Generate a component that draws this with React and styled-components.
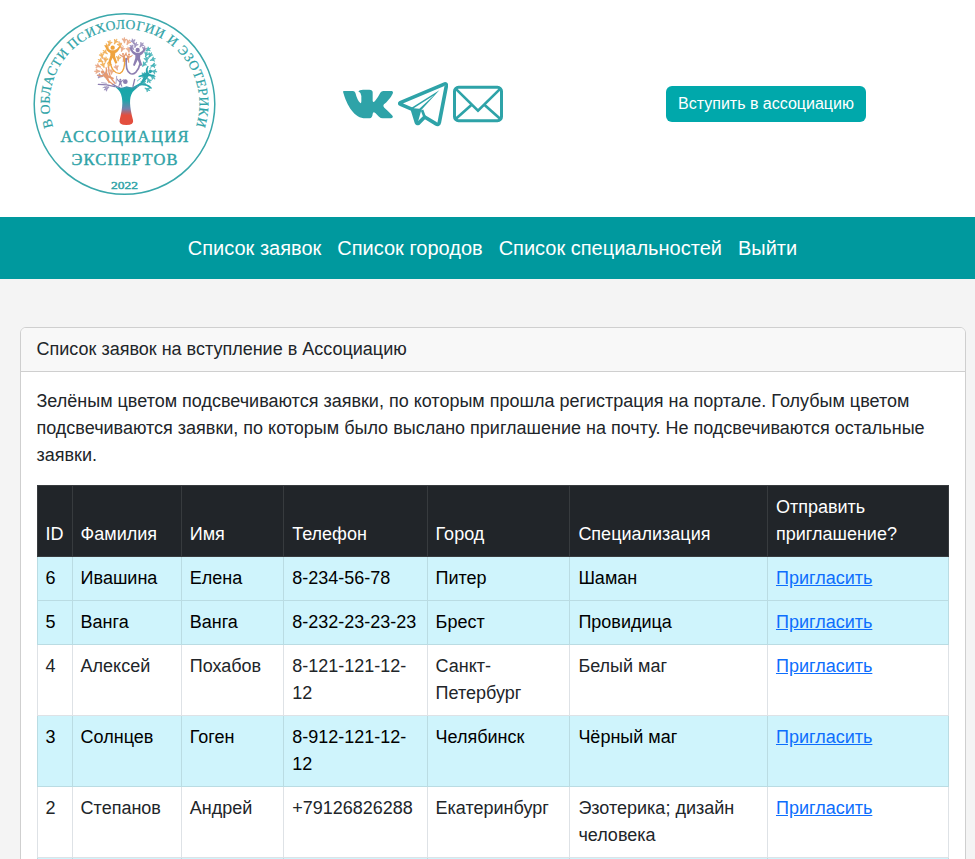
import React from "react";
import styled, { createGlobalStyle } from "styled-components";

const GlobalStyle = createGlobalStyle`
  * { box-sizing: border-box; }
  html, body { margin: 0; height: 100%; overflow: hidden; }
  body {
    background: #f4f4f4;
    color: #212529;
    font: 18px/27px "Liberation Sans", Arial, sans-serif;
  }
`;

const Page = styled.div`
  height: 100vh;
  overflow: hidden;
`;

const Header = styled.header`
  display: grid;
  grid-template-columns: 310px 323px 200px;
  align-items: center;
  height: 217px;
  padding: 0 0 9px 33px;
  background: #fff;
`;

const LogoDrawing = styled.svg`
  display: block;
  width: 183px;
  height: 184px;
  font-family: "Liberation Serif", "Times New Roman", serif;
  fill: #2fa3a7;
`;

const Socials = styled.div`
  display: flex;
  gap: 5px;
`;

const SocialIcon = styled.svg`
  display: block;
  width: 50px;
  height: 50px;
  color: #2ea3a8;
`;

const JoinButton = styled.button`
  height: 36px;
  padding: 0;
  border: 0;
  border-radius: 6px;
  background: #00a8ab;
  color: #fff;
  font: 16px/24px "Liberation Sans", Arial, sans-serif;
`;

const Nav = styled.nav`
  display: flex;
  justify-content: center;
  align-items: center;
  gap: 16px;
  height: 62px;
  padding-left: 10px;
  background: #00999e;
`;

const NavLink = styled.a`
  color: #fff;
  font-size: 20px;
  line-height: 30px;
  white-space: nowrap;
`;

const Card = styled.section`
  margin: 48px 9.5px 0 19.5px;
  border: 1px solid #cfcfcf;
  border-radius: 6px;
  background: #fff;
  overflow: hidden;
`;

const CardTitle = styled.div`
  padding: 8px 16px;
  border-bottom: 1px solid #cfcfcf;
  background: #f8f8f8;
`;

const CardBody = styled.div`
  padding: 16px;
`;

const Note = styled.p`
  margin: 0 0 16px;
`;

const Table = styled.table`
  width: 911.5px;
  table-layout: fixed;
  border-collapse: collapse;
`;

const Column = styled.col`
  width: ${(p) => p.$width}px;
`;

const HeadCell = styled.th`
  padding: 8px;
  border: 1px solid #373b3e;
  background: #212529;
  color: #fff;
  font-weight: 400;
  text-align: left;
  vertical-align: bottom;
`;

const Row = styled.tr`
  height: 44px;
  background: ${(p) => (p.$invited ? "#cff4fc" : "#fff")};
  color: ${(p) => (p.$invited ? "#000" : "#212529")};
  & > td { border: 1px solid ${(p) => (p.$invited ? "#badce3" : "#dee2e6")}; }
`;

const Cell = styled.td`
  padding: 8px;
  vertical-align: top;
`;

const InviteLink = styled.a`
  color: #0d6efd;
  text-decoration: underline;
`;

const navItems = ["Список заявок", "Список городов", "Список специальностей", "Выйти"];
const widths = [35.1, 109.1, 102.5, 143.4, 142.8, 197.6, 181];
const heads = ["ID", "Фамилия", "Имя", "Телефон", "Город", "Специализация", "Отправить приглашение?"];
const requests = [
  { invited: true, cells: ["6", "Ивашина", "Елена", "8-234-56-78", "Питер", "Шаман"] },
  { invited: true, cells: ["5", "Ванга", "Ванга", "8-232-23-23-23", "Брест", "Провидица"] },
  { invited: false, cells: ["4", "Алексей", "Похабов", "8-121-121-12-12", "Санкт-Петербург", "Белый маг"] },
  { invited: true, cells: ["3", "Солнцев", "Гоген", "8-912-121-12-12", "Челябинск", "Чёрный маг"] },
  { invited: false, cells: ["2", "Степанов", "Андрей", "+79126826288", "Екатеринбург", "Эзотерика; дизайн человека"] },
  { invited: true, cells: ["", "", "", "", "", ""] },
];

const twigs = [
  [60, 66, -50], [50, 76, -20], [66, 48, -20], [74, 38, 10], [92, 34, 30], [104, 44, -20],
  [118, 30, 0], [130, 36, 30], [144, 34, -20], [152, 44, 20], [170, 44, 40], [178, 56, 10],
  [190, 58, 60], [196, 74, 30], [204, 88, 70], [184, 88, -10], [178, 102, 40], [206, 106, 80],
  [208, 124, 100], [204, 142, 130], [192, 152, 150], [176, 158, 120], [46, 92, -60],
  [54, 104, -20], [38, 108, -70], [36, 124, -90], [62, 88, 10], [72, 104, 20], [60, 134, -100],
  [80, 124, 10], [112, 56, 20], [130, 58, -10], [44, 138, -80], [64, 176, -120], [176, 134, 20],
  [140, 52, -40], [100, 84, 10], [94, 112, -20], [184, 72, 20], [188, 178, 120],
];

const ORANGE = "#efa33c";
const PEACH = "#e59a72";
const VIOLET = "#8c7eb1";
const TEAL = "#28a6ad";

function crownColor(x, y) {
  if (x > 180 || (x > 165 && y > 90)) return TEAL;
  if (x > 138) return VIOLET;
  if (x > 104) return PEACH;
  if (y > 130) return VIOLET;
  if (y > 104) return PEACH;
  return ORANGE;
}

function Person({ x, y, color, turn = 0, size = 1 }) {
  return (
    <g fill={color} transform={`translate(${x} ${y}) rotate(${turn}) scale(${size})`}>
      <circle r="6.5" />
      <path d="M-19-7Q-14 5-5 8L5 8Q15 4 20-5L23-3Q18 12 8 16L7 25 14 46 8 48 0 30-9 48-14 46-7 24-7 16Q-19 11-23-5Z" />
    </g>
  );
}

function Tree() {
  return (
    <g transform="translate(52 18) scale(.33333)">
      {twigs.map(([x, y, turn]) => (
        <path
          key={`${x}-${y}`}
          transform={`translate(${x} ${y}) rotate(${turn})`}
          d="M-1 10Q-2 2-8-3Q-6-7-2-3L-1-9Q4-8 2-2Q6-6 9-2Q2 1 2 10Z"
          fill={crownColor(x, y)}
          opacity=".8"
        />
      ))}
      <Person x={83} y={53} color={ORANGE} />
      <Person x={158} y={60} color={VIOLET} />
      <Person x={53} y={126} turn={-45} size={0.8} color={PEACH} />
      <Person x={196} y={124} turn={52} size={0.8} color={TEAL} />
      <Person x={114} y={72} turn={-15} size={0.5} color={PEACH} />
      <Person x={132} y={74} turn={15} size={0.5} color={PEACH} />
      <Person x={106} y={149} size={0.45} color={VIOLET} />
      <circle cx="121" cy="155" r="7" fill={VIOLET} />
      <g fill="none" strokeLinecap="round">
        <path stroke={ORANGE} strokeWidth="4" d="M76 94C77 118 92 132 105 130Q120 124 119 86" />
        <path stroke={VIOLET} strokeWidth="5" d="M165 102C160 124 146 137 135 130Q121 122 124 86" />
        <path stroke={PEACH} strokeWidth="4" d="M58 138Q68 154 84 163M71 112Q70 141 90 160" />
        <path stroke={VIOLET} strokeWidth="4" d="M84 163Q95 171 104 173M40 163Q67 163 89 170M149 148L144 169" />
        <path stroke={TEAL} strokeWidth="5" d="M190 135Q176 160 145 173M198 174Q180 158 160 166" />
        <path stroke={VIOLET} strokeWidth="2" d="M64 160L50 158M72 167L54 173M95 139L93 160M141 45L135 63" />
        <path stroke={TEAL} strokeWidth="2" d="M157 153L168 144M177 151L177 131M195 116L207 101M184 84L198 78" />
        <path stroke={PEACH} strokeWidth="2" d="M53 119L39 107M61 91L48 82M102 34L112 47" />
      </g>
      <path fill="url(#trunk)" d="M76 161Q101 180 125 169Q150 178 177 158Q154 174 143 186C131 204 134 230 144 270Q148 285 124 285Q100 285 104 270C114 230 115 205 105 186Q98 174 76 161Z" />
    </g>
  );
}

function Logo() {
  return (
    <LogoDrawing viewBox="0 0 183 184" role="img" aria-label="Ассоциация экспертов">
      <defs>
        <linearGradient id="trunk" x1="0" y1="0" x2="0" y2="1">
          <stop offset="0" stopColor="#8276b4" />
          <stop offset=".17" stopColor="#18a7a9" />
          <stop offset=".42" stopColor="#20a4aa" />
          <stop offset=".62" stopColor="#7681ad" />
          <stop offset=".77" stopColor="#e34e3e" />
        </linearGradient>
        <path id="motto" d="M20.1 114.9A75 75 0 1 1 162.9 114.9" />
      </defs>
      <circle cx="91.5" cy="92" r="90.3" fill="none" stroke="#3aa8ab" strokeWidth="1.5" />
      <text fontSize="13.5" textLength="281" lengthAdjust="spacing" stroke="#2fa3a7" strokeWidth=".2">
        <textPath href="#motto">В ОБЛАСТИ ПСИХОЛОГИИ И ЭЗОТЕРИКИ</textPath>
      </text>
      <Tree />
      <g stroke="#2fa3a7" strokeWidth=".4">
        <text x="27.5" y="129.5" fontSize="16.5" textLength="128" lengthAdjust="spacing">АССОЦИАЦИЯ</text>
        <text x="38.5" y="153" fontSize="16.5" textLength="106" lengthAdjust="spacing">ЭКСПЕРТОВ</text>
        <text x="78" y="176.5" fontSize="10.5" textLength="27" lengthAdjust="spacingAndGlyphs">2022</text>
      </g>
    </LogoDrawing>
  );
}

function VkIcon() {
  return (
    <SocialIcon viewBox="0 0 150 150" fill="currentColor">
      <path transform="translate(0 31)" d="M0 7Q0 5 3 5H30Q35 5 37 10C41 25 46 36 52 41Q55 43 55 36V20Q54 10 46 6Q49 1 60 1H79Q89 1 89 9V34Q90 42 96 35Q105 24 112 10Q115 5 121 5H146Q152 6 149 13C143 26 131 38 123 45Q119 50 124 55C134 64 144 73 149 80Q151 86 144 87H119Q113 87 108 82L97 71Q90 65 89 74Q88 86 80 87H68C34 87 12 49 0 7Z" />
    </SocialIcon>
  );
}

function TelegramIcon() {
  return (
    <SocialIcon viewBox="0 0 150 150" fill="none" stroke="currentColor" strokeWidth="11" strokeLinejoin="round">
      <path d="M7 71L137 16Q146 12 145 21L124 130Q122 140 113 134L80 114 61 133Q57 135 55 130L43 91 8 76Q3 74 7 71Z" />
      <path stroke="none" fill="currentColor" d="M38 88L124 34 70 93 59 132Z" />
      <path stroke="none" fill="#fff" d="M47 88L108 49 64 89Z" />
      <path strokeWidth="8" d="M72 93L80 114" />
    </SocialIcon>
  );
}

function MailIcon() {
  return (
    <SocialIcon viewBox="0 0 150 150" fill="none" stroke="currentColor" strokeWidth="9">
      <rect x="4.5" y="25" width="141" height="100" rx="12" />
      <path strokeWidth="8" d="M7 28L75 95 143 28M7 121L56 77M143 121L94 77" />
    </SocialIcon>
  );
}

export default function App() {
  return (
    <Page>
      <GlobalStyle />
      <Header>
        <Logo />
        <Socials>
          <VkIcon />
          <TelegramIcon />
          <MailIcon />
        </Socials>
        <JoinButton>Вступить в ассоциацию</JoinButton>
      </Header>
      <Nav>
        {navItems.map((item) => <NavLink key={item}>{item}</NavLink>)}
      </Nav>
      <Card>
        <CardTitle>Список заявок на вступление в Ассоциацию</CardTitle>
        <CardBody>
          <Note>
            Зелёным цветом подсвечиваются заявки, по которым прошла регистрация на портале. Голубым
            цветом подсвечиваются заявки, по которым было выслано приглашение на почту. Не
            подсвечиваются остальные заявки.
          </Note>
          <Table>
            <colgroup>{widths.map((w, i) => <Column key={i} $width={w} />)}</colgroup>
            <thead>
              <tr>{heads.map((h) => <HeadCell key={h}>{h}</HeadCell>)}</tr>
            </thead>
            <tbody>
              {requests.map(({ invited, cells }) => (
                <Row key={cells[0]} $invited={invited}>
                  {cells.map((c, i) => <Cell key={i}>{c}</Cell>)}
                  <Cell>{cells[0] && <InviteLink href="#">Пригласить</InviteLink>}</Cell>
                </Row>
              ))}
            </tbody>
          </Table>
        </CardBody>
      </Card>
    </Page>
  );
}
